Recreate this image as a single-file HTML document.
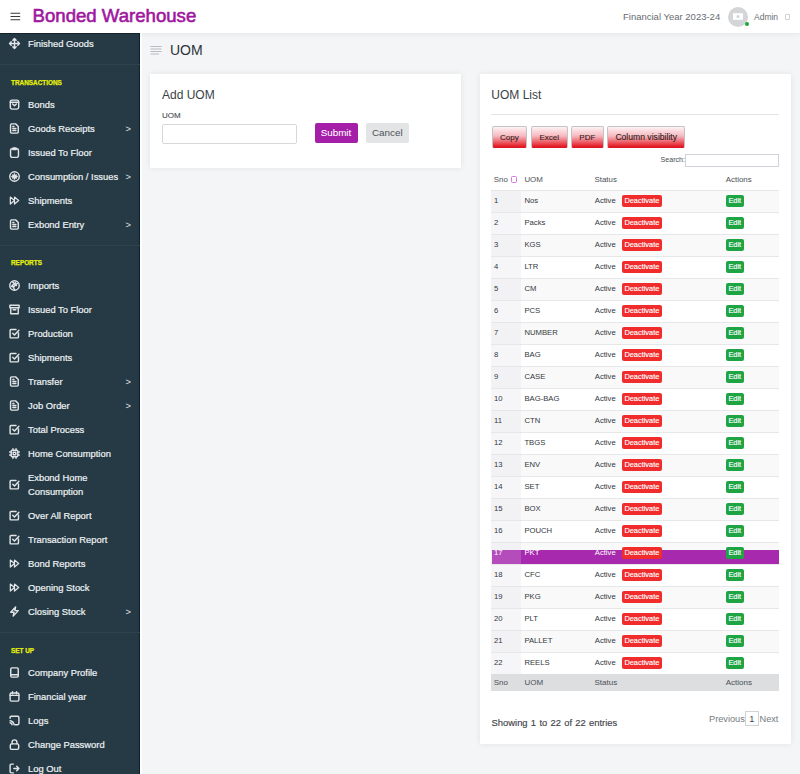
<!DOCTYPE html>
<html><head><meta charset="utf-8"><style>
*{box-sizing:border-box;margin:0;padding:0}
html,body{width:800px;height:774px;overflow:hidden;background:#f4f5f7;font-family:"Liberation Sans", sans-serif;position:relative}
.abs{position:absolute}
#hdr{position:absolute;left:0;top:0;width:800px;height:33px;background:#fff;box-shadow:0 2px 5px rgba(0,0,0,0.05);z-index:3}
#side{position:absolute;left:0;top:0;width:142px;height:774px;background:#263a45;border-right:2px solid #fff;z-index:2;overflow:hidden}
#side>div{position:absolute}
.si{left:28px;font-size:9.4px;line-height:14px;color:#eef2f4;white-space:nowrap;-webkit-text-stroke:0.2px #eef2f4}
.sic{left:9.1px;width:11px;height:11px;line-height:0;margin-top:-0.5px}
.sar{left:125.5px;font-size:9.4px;line-height:14px;color:#dfe5e8}
.sep{left:0;width:140px;height:1px;background:#2e434e}
.slab{left:11px;font-size:6.4px;line-height:10px;font-weight:bold;color:#e6f00a;-webkit-text-stroke:0.25px #e6f00a}
.card{position:absolute;background:#fff;box-shadow:0 0 6px rgba(0,0,0,0.08)}
.tr{position:absolute;left:491px;width:288px;height:22px;border-top:1px solid #e6e7e9;background:#fff}
.tr.odd{background:#f9f9f9}
.tr .c0{position:absolute;left:0;top:0;width:29.5px;height:21px;background:#f6f6f8}
.tr.odd .c0{background:#f2f2f4}
.sel{position:absolute;left:491.5px;width:287.5px;height:14.5px;background:#a72aae}
.c0s{position:absolute;left:0;top:0;width:29px;height:14.5px;background:#b44dbb}
.td{position:absolute;font-size:7.7px;line-height:22px;color:#33383d;white-space:nowrap;}
.deact{position:absolute;left:621.9px;width:40px;height:12px;background:#f12c2c;border-radius:2px;color:#fff;font-size:7.4px;line-height:12.9px;height:12px;text-align:center;-webkit-text-stroke:0.15px #fff}
.edit{position:absolute;left:725.75px;width:18px;height:12px;background:#1fa443;border-radius:2px;color:#fff;font-size:7.4px;line-height:12.9px;height:12px;text-align:center;-webkit-text-stroke:0.15px #fff}
.th{position:absolute;font-size:7.9px;line-height:12px;color:#4a4f55;white-space:nowrap}
.tf{position:absolute;font-size:8px;line-height:12px;color:#4a4f55;white-space:nowrap}
.dtb{position:absolute;top:126.2px;height:21.4px;border:1px solid #c4c4c4;border-bottom-color:#d81a24;border-radius:2px;background:linear-gradient(#fdf2f4,#f7b9c0 45%,#e3141e);color:#2a1e20;font-size:8px;line-height:21.6px;text-align:center;-webkit-text-stroke:0.1px #2a1e20}
</style></head><body>
<div id="hdr">
  <svg class="abs" style="left:10px;top:12px" width="11" height="9" viewBox="0 0 11 9"><path d="M0.5 1.2H10.2M0.5 4.5H10.2M0.5 7.8H10.2" stroke="#3c3c3c" stroke-width="1.1"/></svg>
  <div class="abs" style="left:32.6px;top:4px;font-size:18.6px;line-height:24px;color:#a0179f;white-space:nowrap;-webkit-text-stroke:0.6px #a0179f">Bonded Warehouse</div>
  <div class="abs" style="left:623px;top:11px;font-size:9.5px;line-height:12px;color:#676c72;white-space:nowrap">Financial Year 2023-24</div>
  <div class="abs" style="left:728px;top:6.5px;width:20px;height:20px;border-radius:50%;background:#d4d5d7"></div>
  <svg class="abs" style="left:732px;top:12px" width="12" height="9" viewBox="0 0 12 9"><rect x="1" y="1.2" width="10" height="6.6" fill="#fff"/><circle cx="6" cy="4.5" r="1.5" fill="#d4d5d7"/></svg>
  <div class="abs" style="left:744.5px;top:21.5px;width:4px;height:4px;border-radius:50%;background:#1aa83a"></div>
  <div class="abs" style="left:754px;top:11px;font-size:8.5px;line-height:12px;color:#6a6f74;white-space:nowrap">Admin</div>
  <div class="abs" style="left:785px;top:13.5px;width:5px;height:6px;border:1px solid #cfd1d4;border-radius:1px"></div>
</div>
<div id="side">
<div style="left:137px;top:33px;width:3px;height:741px;background:#22394a"></div><div style="left:139px;top:33px;width:1px;height:741px;background:#0f212b"></div><div style="left:0;top:33px;width:140px;height:1px;background:#14262f"></div>
<div class="si" style="top:36.67px">Finished Goods</div>
<div class="sic" style="top:38.00px"><svg width="11" height="11" viewBox="0 0 10 10" style="overflow:visible"><path d="M5 0.5V9.5M0.5 5H9.5M3.5 2L5 0.5L6.5 2M3.5 8L5 9.5L6.5 8M2 3.5L0.5 5L2 6.5M8 3.5L9.5 5L8 6.5" stroke="#e1e5e8" stroke-width="1.3" fill="none" stroke-linecap="round" stroke-linejoin="round"/></svg></div>
<div class="si" style="top:98.07px">Bonds</div>
<div class="sic" style="top:99.40px"><svg width="11" height="11" viewBox="0 0 10 10" style="overflow:visible"><rect x="1.2" y="1" width="7.6" height="8.2" rx="1.6" stroke="#e1e5e8" stroke-width="1.3" fill="none" stroke-linecap="round" stroke-linejoin="round"/><path d="M1.2 3H8.8M3.3 4.6L5 6.2L6.7 4.6" stroke="#e1e5e8" stroke-width="1.3" fill="none" stroke-linecap="round" stroke-linejoin="round"/></svg></div>
<div class="si" style="top:122.07px">Goods Receipts</div>
<div class="sic" style="top:123.40px"><svg width="11" height="11" viewBox="0 0 10 10" style="overflow:visible"><path d="M2.4 0.8H6L8.4 3.2V8.2Q8.4 9.2 7.4 9.2H2.4Q1.4 9.2 1.4 8.2V1.8Q1.4 0.8 2.4 0.8ZM3.5 5H6.3M3.5 6.8H6.3M3.5 3.2H4.5" stroke="#e1e5e8" stroke-width="1.3" fill="none" stroke-linecap="round" stroke-linejoin="round"/></svg></div>
<div class="sar" style="top:122.07px">&gt;</div>
<div class="si" style="top:146.07px">Issued To Floor</div>
<div class="sic" style="top:147.40px"><svg width="11" height="11" viewBox="0 0 10 10" style="overflow:visible"><rect x="1.4" y="1.6" width="7.2" height="7.8" rx="1.4" stroke="#e1e5e8" stroke-width="1.3" fill="none" stroke-linecap="round" stroke-linejoin="round"/><path d="M3.6 0.8H6.4V2.4H3.6Z" stroke="#e1e5e8" stroke-width="1.3" fill="none" stroke-linecap="round" stroke-linejoin="round"/></svg></div>
<div class="si" style="top:170.07px">Consumption / Issues</div>
<div class="sic" style="top:171.40px"><svg width="11" height="11" viewBox="0 0 10 10" style="overflow:visible"><circle cx="5" cy="5" r="4.3" stroke="#e1e5e8" stroke-width="1.3" fill="none" stroke-linecap="round" stroke-linejoin="round"/><path d="M3.4 3.6L6.6 6.4M6.6 3.6L3.4 6.4M5 2.6V7.4M2.6 5H7.4" stroke="#e1e5e8" stroke-width="1.3" fill="none" stroke-linecap="round" stroke-linejoin="round"/></svg></div>
<div class="sar" style="top:170.07px">&gt;</div>
<div class="si" style="top:194.07px">Shipments</div>
<div class="sic" style="top:195.40px"><svg width="11" height="11" viewBox="0 0 10 10" style="overflow:visible"><path d="M1.2 1.8L5 5L1.2 8.2ZM5 1.8L8.8 5L5 8.2Z" stroke="#e1e5e8" stroke-width="1.1" fill="none" stroke-linecap="round" stroke-linejoin="round"/></svg></div>
<div class="si" style="top:218.07px">Exbond Entry</div>
<div class="sic" style="top:219.40px"><svg width="11" height="11" viewBox="0 0 10 10" style="overflow:visible"><path d="M2.4 0.8H6L8.4 3.2V8.2Q8.4 9.2 7.4 9.2H2.4Q1.4 9.2 1.4 8.2V1.8Q1.4 0.8 2.4 0.8ZM3.5 5H6.3M3.5 6.8H6.3M3.5 3.2H4.5" stroke="#e1e5e8" stroke-width="1.3" fill="none" stroke-linecap="round" stroke-linejoin="round"/></svg></div>
<div class="sar" style="top:218.07px">&gt;</div>
<div class="si" style="top:279.07px">Imports</div>
<div class="sic" style="top:280.40px"><svg width="11" height="11" viewBox="0 0 10 10" style="overflow:visible"><circle cx="5" cy="5" r="4.3" stroke="#e1e5e8" stroke-width="1.3" fill="none" stroke-linecap="round" stroke-linejoin="round"/><path d="M3 1.6L6.8 5M7.6 3L3.8 6.8M2.2 6L6 2.4M5 8.6L3 4.6" stroke="#e1e5e8" stroke-width="1.3" fill="none" stroke-linecap="round" stroke-linejoin="round"/></svg></div>
<div class="si" style="top:303.07px">Issued To Floor</div>
<div class="sic" style="top:304.40px"><svg width="11" height="11" viewBox="0 0 10 10" style="overflow:visible"><path d="M0.8 1.2H9.2V3.4H0.8ZM1.6 3.4V8.8H8.4V3.4M3.8 5.2H6.2" stroke="#e1e5e8" stroke-width="1.3" fill="none" stroke-linecap="round" stroke-linejoin="round"/></svg></div>
<div class="si" style="top:327.07px">Production</div>
<div class="sic" style="top:328.40px"><svg width="11" height="11" viewBox="0 0 10 10" style="overflow:visible"><path d="M8.6 4.6V8.2Q8.6 9 7.8 9H1.8Q1 9 1 8.2V2.2Q1 1.4 1.8 1.4H6.4M3.4 4.8L5 6.4L9 2" stroke="#e1e5e8" stroke-width="1.3" fill="none" stroke-linecap="round" stroke-linejoin="round"/></svg></div>
<div class="si" style="top:351.07px">Shipments</div>
<div class="sic" style="top:352.40px"><svg width="11" height="11" viewBox="0 0 10 10" style="overflow:visible"><path d="M8.6 4.6V8.2Q8.6 9 7.8 9H1.8Q1 9 1 8.2V2.2Q1 1.4 1.8 1.4H6.4M3.4 4.8L5 6.4L9 2" stroke="#e1e5e8" stroke-width="1.3" fill="none" stroke-linecap="round" stroke-linejoin="round"/></svg></div>
<div class="si" style="top:375.07px">Transfer</div>
<div class="sic" style="top:376.40px"><svg width="11" height="11" viewBox="0 0 10 10" style="overflow:visible"><path d="M2.4 0.8H6L8.4 3.2V8.2Q8.4 9.2 7.4 9.2H2.4Q1.4 9.2 1.4 8.2V1.8Q1.4 0.8 2.4 0.8ZM3.5 5H6.3M3.5 6.8H6.3M3.5 3.2H4.5" stroke="#e1e5e8" stroke-width="1.3" fill="none" stroke-linecap="round" stroke-linejoin="round"/></svg></div>
<div class="sar" style="top:375.07px">&gt;</div>
<div class="si" style="top:399.07px">Job Order</div>
<div class="sic" style="top:400.40px"><svg width="11" height="11" viewBox="0 0 10 10" style="overflow:visible"><path d="M2.4 0.8H6L8.4 3.2V8.2Q8.4 9.2 7.4 9.2H2.4Q1.4 9.2 1.4 8.2V1.8Q1.4 0.8 2.4 0.8ZM3.5 5H6.3M3.5 6.8H6.3M3.5 3.2H4.5" stroke="#e1e5e8" stroke-width="1.3" fill="none" stroke-linecap="round" stroke-linejoin="round"/></svg></div>
<div class="sar" style="top:399.07px">&gt;</div>
<div class="si" style="top:423.07px">Total Process</div>
<div class="sic" style="top:424.40px"><svg width="11" height="11" viewBox="0 0 10 10" style="overflow:visible"><path d="M8.6 4.6V8.2Q8.6 9 7.8 9H1.8Q1 9 1 8.2V2.2Q1 1.4 1.8 1.4H6.4M3.4 4.8L5 6.4L9 2" stroke="#e1e5e8" stroke-width="1.3" fill="none" stroke-linecap="round" stroke-linejoin="round"/></svg></div>
<div class="si" style="top:447.07px">Home Consumption</div>
<div class="sic" style="top:448.40px"><svg width="11" height="11" viewBox="0 0 10 10" style="overflow:visible"><rect x="2" y="2" width="6" height="6" rx="1" stroke="#e1e5e8" stroke-width="1.3" fill="none" stroke-linecap="round" stroke-linejoin="round"/><rect x="3.8" y="3.8" width="2.4" height="2.4" stroke="#e1e5e8" stroke-width="1.3" fill="none" stroke-linecap="round" stroke-linejoin="round"/><path d="M3.6 0.6V2M6.4 0.6V2M3.6 8V9.4M6.4 8V9.4M0.6 3.6H2M0.6 6.4H2M8 3.6H9.4M8 6.4H9.4" stroke="#e1e5e8" stroke-width="1.3" fill="none" stroke-linecap="round" stroke-linejoin="round"/></svg></div>
<div class="si" style="top:471.07px">Exbond Home<br>Consumption</div>
<div class="sic" style="top:479.40px"><svg width="11" height="11" viewBox="0 0 10 10" style="overflow:visible"><path d="M8.6 4.6V8.2Q8.6 9 7.8 9H1.8Q1 9 1 8.2V2.2Q1 1.4 1.8 1.4H6.4M3.4 4.8L5 6.4L9 2" stroke="#e1e5e8" stroke-width="1.3" fill="none" stroke-linecap="round" stroke-linejoin="round"/></svg></div>
<div class="si" style="top:509.07px">Over All Report</div>
<div class="sic" style="top:510.40px"><svg width="11" height="11" viewBox="0 0 10 10" style="overflow:visible"><path d="M8.6 4.6V8.2Q8.6 9 7.8 9H1.8Q1 9 1 8.2V2.2Q1 1.4 1.8 1.4H6.4M3.4 4.8L5 6.4L9 2" stroke="#e1e5e8" stroke-width="1.3" fill="none" stroke-linecap="round" stroke-linejoin="round"/></svg></div>
<div class="si" style="top:533.07px">Transaction Report</div>
<div class="sic" style="top:534.40px"><svg width="11" height="11" viewBox="0 0 10 10" style="overflow:visible"><path d="M8.6 4.6V8.2Q8.6 9 7.8 9H1.8Q1 9 1 8.2V2.2Q1 1.4 1.8 1.4H6.4M3.4 4.8L5 6.4L9 2" stroke="#e1e5e8" stroke-width="1.3" fill="none" stroke-linecap="round" stroke-linejoin="round"/></svg></div>
<div class="si" style="top:557.07px">Bond Reports</div>
<div class="sic" style="top:558.40px"><svg width="11" height="11" viewBox="0 0 10 10" style="overflow:visible"><path d="M1.2 1.8L5 5L1.2 8.2ZM5 1.8L8.8 5L5 8.2Z" stroke="#e1e5e8" stroke-width="1.1" fill="none" stroke-linecap="round" stroke-linejoin="round"/></svg></div>
<div class="si" style="top:581.07px">Opening Stock</div>
<div class="sic" style="top:582.40px"><svg width="11" height="11" viewBox="0 0 10 10" style="overflow:visible"><path d="M1.2 1.8L5 5L1.2 8.2ZM5 1.8L8.8 5L5 8.2Z" stroke="#e1e5e8" stroke-width="1.1" fill="none" stroke-linecap="round" stroke-linejoin="round"/></svg></div>
<div class="si" style="top:605.07px">Closing Stock</div>
<div class="sic" style="top:606.40px"><svg width="11" height="11" viewBox="0 0 10 10" style="overflow:visible"><path d="M6 0.8L1.6 5.6H4.6L3.8 9.2L8.4 4.2H5.4Z" stroke="#e1e5e8" stroke-width="1.3" fill="none" stroke-linecap="round" stroke-linejoin="round"/></svg></div>
<div class="sar" style="top:605.07px">&gt;</div>
<div class="si" style="top:666.47px">Company Profile</div>
<div class="sic" style="top:667.80px"><svg width="11" height="11" viewBox="0 0 10 10" style="overflow:visible"><rect x="1.6" y="0.8" width="6.8" height="8.4" rx="1" stroke="#e1e5e8" stroke-width="1.3" fill="none" stroke-linecap="round" stroke-linejoin="round"/><path d="M1.6 7H8.4" stroke="#e1e5e8" stroke-width="1.3" fill="none" stroke-linecap="round" stroke-linejoin="round"/></svg></div>
<div class="si" style="top:690.47px">Financial year</div>
<div class="sic" style="top:691.80px"><svg width="11" height="11" viewBox="0 0 10 10" style="overflow:visible"><rect x="1" y="1.8" width="8" height="7.4" rx="1.2" stroke="#e1e5e8" stroke-width="1.3" fill="none" stroke-linecap="round" stroke-linejoin="round"/><path d="M1 4H9M3.2 0.6V2.6M6.8 0.6V2.6" stroke="#e1e5e8" stroke-width="1.3" fill="none" stroke-linecap="round" stroke-linejoin="round"/></svg></div>
<div class="si" style="top:714.47px">Logs</div>
<div class="sic" style="top:715.80px"><svg width="11" height="11" viewBox="0 0 10 10" style="overflow:visible"><path d="M1 3V2.2Q1 1.2 2 1.2H8Q9 1.2 9 2.2V7.8Q9 8.8 8 8.8H5.6M1 5.2Q4 5.4 4.6 8.8M1 7Q2.6 7.2 2.8 8.8" stroke="#e1e5e8" stroke-width="1.3" fill="none" stroke-linecap="round" stroke-linejoin="round"/></svg></div>
<div class="si" style="top:738.47px">Change Password</div>
<div class="sic" style="top:739.80px"><svg width="11" height="11" viewBox="0 0 10 10" style="overflow:visible"><rect x="1.2" y="4.4" width="7.6" height="5" rx="1.2" stroke="#e1e5e8" stroke-width="1.3" fill="none" stroke-linecap="round" stroke-linejoin="round"/><path d="M2.8 4.4V3Q2.8 0.8 5 0.8Q7.2 0.8 7.2 3V4.4" stroke="#e1e5e8" stroke-width="1.3" fill="none" stroke-linecap="round" stroke-linejoin="round"/></svg></div>
<div class="si" style="top:762.47px">Log Out</div>
<div class="sic" style="top:763.80px"><svg width="11" height="11" viewBox="0 0 10 10" style="overflow:visible"><path d="M4 1H2Q1 1 1 2V8Q1 9 2 9H4M4.4 5H9M7 3L9 5L7 7" stroke="#e1e5e8" stroke-width="1.3" fill="none" stroke-linecap="round" stroke-linejoin="round"/></svg></div>
<div class="sep" style="top:64px"></div>
<div class="sep" style="top:245px"></div>
<div class="sep" style="top:632px"></div>
<div class="slab" style="top:77.76px">TRANSACTIONS</div>
<div class="slab" style="top:258.46px">REPORTS</div>
<div class="slab" style="top:645.76px">SET UP</div>
</div>
<!-- page title -->
<svg class="abs" style="left:150px;top:45px" width="13" height="10" viewBox="0 0 13 10"><path d="M0.5 1.5H11.5M0.5 4H11.5M0.5 6.5H11.5M0.5 9H9" stroke="#b9bcc0" stroke-width="1"/></svg>
<div class="abs" style="left:170px;top:41px;font-size:14px;line-height:18px;color:#2d333a">UOM</div>

<!-- card 1 -->
<div class="card" style="left:150px;top:74px;width:311px;height:94px"></div>
<div class="abs" style="left:162px;top:87px;font-size:12px;line-height:16px;color:#3a3f45">Add UOM</div>
<div class="abs" style="left:162px;top:111px;font-size:8px;line-height:10px;color:#44494e;-webkit-text-stroke:0.1px #44494e">UOM</div>
<div class="abs" style="left:162px;top:124.4px;width:134.6px;height:19.4px;border:1px solid #d5d7da;border-radius:2px;background:#fff"></div>
<div class="abs" style="left:314.5px;top:122.6px;width:43px;height:20px;background:#a51ea8;border-radius:2px;color:#fff;font-size:9.8px;line-height:20px;text-align:center;-webkit-text-stroke:0.05px #fff">Submit</div>
<div class="abs" style="left:366px;top:122.6px;width:42.6px;height:20px;background:#e3e4e6;border-radius:2px;color:#4d5358;font-size:9.9px;line-height:20px;text-align:center">Cancel</div>

<!-- card 2 -->
<div class="card" style="left:480px;top:74px;width:311px;height:670px"></div>
<div class="abs" style="left:491.3px;top:87px;font-size:12px;line-height:16px;color:#3a3f45">UOM List</div>
<div class="abs" style="left:491px;top:114px;width:288px;height:1px;background:#e3e4e6"></div>
<div class="dtb" style="left:491.6px;width:35.6px">Copy</div>
<div class="dtb" style="left:531px;width:36.5px">Excel</div>
<div class="dtb" style="left:570.9px;width:32.9px">PDF</div>
<div class="dtb" style="left:606.9px;width:78.6px;font-size:8.6px">Column visibility</div>
<div class="abs" style="left:660.6px;top:154px;font-size:7.1px;line-height:12px;color:#4a4f54">Search:</div>
<div class="abs" style="left:685.2px;top:153.5px;width:93.5px;height:13.2px;border:1px solid #cfd2d6;background:#fff"></div>
<div class="th" style="left:493.75px;top:173.7px">Sno</div>
<div class="abs" style="left:510.6px;top:175.6px;width:6.3px;height:7.2px;border:1px solid #d27ad8;border-radius:1.5px"></div>
<div class="th" style="left:524.4px;top:173.7px">UOM</div>
<div class="th" style="left:594.5px;top:173.7px">Status</div>
<div class="th" style="left:725.75px;top:173.7px">Actions</div>
<div class="tr odd" style="top:190px"><div class="c0"></div></div>
<div class="td" style="top:190.2px;left:494px;">1</div>
<div class="td" style="top:190.2px;left:524.4px;">Nos</div>
<div class="td" style="top:190.2px;left:594.75px;">Active</div>
<div class="deact" style="top:195.25px">Deactivate</div>
<div class="edit" style="top:195.25px">Edit</div>
<div class="tr" style="top:212px"><div class="c0"></div></div>
<div class="td" style="top:212.2px;left:494px;">2</div>
<div class="td" style="top:212.2px;left:524.4px;">Packs</div>
<div class="td" style="top:212.2px;left:594.75px;">Active</div>
<div class="deact" style="top:217.25px">Deactivate</div>
<div class="edit" style="top:217.25px">Edit</div>
<div class="tr odd" style="top:234px"><div class="c0"></div></div>
<div class="td" style="top:234.2px;left:494px;">3</div>
<div class="td" style="top:234.2px;left:524.4px;">KGS</div>
<div class="td" style="top:234.2px;left:594.75px;">Active</div>
<div class="deact" style="top:239.25px">Deactivate</div>
<div class="edit" style="top:239.25px">Edit</div>
<div class="tr" style="top:256px"><div class="c0"></div></div>
<div class="td" style="top:256.2px;left:494px;">4</div>
<div class="td" style="top:256.2px;left:524.4px;">LTR</div>
<div class="td" style="top:256.2px;left:594.75px;">Active</div>
<div class="deact" style="top:261.25px">Deactivate</div>
<div class="edit" style="top:261.25px">Edit</div>
<div class="tr odd" style="top:278px"><div class="c0"></div></div>
<div class="td" style="top:278.2px;left:494px;">5</div>
<div class="td" style="top:278.2px;left:524.4px;">CM</div>
<div class="td" style="top:278.2px;left:594.75px;">Active</div>
<div class="deact" style="top:283.25px">Deactivate</div>
<div class="edit" style="top:283.25px">Edit</div>
<div class="tr" style="top:300px"><div class="c0"></div></div>
<div class="td" style="top:300.2px;left:494px;">6</div>
<div class="td" style="top:300.2px;left:524.4px;">PCS</div>
<div class="td" style="top:300.2px;left:594.75px;">Active</div>
<div class="deact" style="top:305.25px">Deactivate</div>
<div class="edit" style="top:305.25px">Edit</div>
<div class="tr odd" style="top:322px"><div class="c0"></div></div>
<div class="td" style="top:322.2px;left:494px;">7</div>
<div class="td" style="top:322.2px;left:524.4px;">NUMBER</div>
<div class="td" style="top:322.2px;left:594.75px;">Active</div>
<div class="deact" style="top:327.25px">Deactivate</div>
<div class="edit" style="top:327.25px">Edit</div>
<div class="tr" style="top:344px"><div class="c0"></div></div>
<div class="td" style="top:344.2px;left:494px;">8</div>
<div class="td" style="top:344.2px;left:524.4px;">BAG</div>
<div class="td" style="top:344.2px;left:594.75px;">Active</div>
<div class="deact" style="top:349.25px">Deactivate</div>
<div class="edit" style="top:349.25px">Edit</div>
<div class="tr odd" style="top:366px"><div class="c0"></div></div>
<div class="td" style="top:366.2px;left:494px;">9</div>
<div class="td" style="top:366.2px;left:524.4px;">CASE</div>
<div class="td" style="top:366.2px;left:594.75px;">Active</div>
<div class="deact" style="top:371.25px">Deactivate</div>
<div class="edit" style="top:371.25px">Edit</div>
<div class="tr" style="top:388px"><div class="c0"></div></div>
<div class="td" style="top:388.2px;left:494px;">10</div>
<div class="td" style="top:388.2px;left:524.4px;">BAG-BAG</div>
<div class="td" style="top:388.2px;left:594.75px;">Active</div>
<div class="deact" style="top:393.25px">Deactivate</div>
<div class="edit" style="top:393.25px">Edit</div>
<div class="tr odd" style="top:410px"><div class="c0"></div></div>
<div class="td" style="top:410.2px;left:494px;">11</div>
<div class="td" style="top:410.2px;left:524.4px;">CTN</div>
<div class="td" style="top:410.2px;left:594.75px;">Active</div>
<div class="deact" style="top:415.25px">Deactivate</div>
<div class="edit" style="top:415.25px">Edit</div>
<div class="tr" style="top:432px"><div class="c0"></div></div>
<div class="td" style="top:432.2px;left:494px;">12</div>
<div class="td" style="top:432.2px;left:524.4px;">TBGS</div>
<div class="td" style="top:432.2px;left:594.75px;">Active</div>
<div class="deact" style="top:437.25px">Deactivate</div>
<div class="edit" style="top:437.25px">Edit</div>
<div class="tr odd" style="top:454px"><div class="c0"></div></div>
<div class="td" style="top:454.2px;left:494px;">13</div>
<div class="td" style="top:454.2px;left:524.4px;">ENV</div>
<div class="td" style="top:454.2px;left:594.75px;">Active</div>
<div class="deact" style="top:459.25px">Deactivate</div>
<div class="edit" style="top:459.25px">Edit</div>
<div class="tr" style="top:476px"><div class="c0"></div></div>
<div class="td" style="top:476.2px;left:494px;">14</div>
<div class="td" style="top:476.2px;left:524.4px;">SET</div>
<div class="td" style="top:476.2px;left:594.75px;">Active</div>
<div class="deact" style="top:481.25px">Deactivate</div>
<div class="edit" style="top:481.25px">Edit</div>
<div class="tr odd" style="top:498px"><div class="c0"></div></div>
<div class="td" style="top:498.2px;left:494px;">15</div>
<div class="td" style="top:498.2px;left:524.4px;">BOX</div>
<div class="td" style="top:498.2px;left:594.75px;">Active</div>
<div class="deact" style="top:503.25px">Deactivate</div>
<div class="edit" style="top:503.25px">Edit</div>
<div class="tr" style="top:520px"><div class="c0"></div></div>
<div class="td" style="top:520.2px;left:494px;">16</div>
<div class="td" style="top:520.2px;left:524.4px;">POUCH</div>
<div class="td" style="top:520.2px;left:594.75px;">Active</div>
<div class="deact" style="top:525.25px">Deactivate</div>
<div class="edit" style="top:525.25px">Edit</div>
<div class="tr odd" style="top:542px"><div class="c0"></div></div>
<div class="sel" style="top:549.5px"><div class="c0s"></div></div>
<div class="td" style="top:542.2px;left:494px;color:#fff;-webkit-text-stroke-color:#fff;">17</div>
<div class="td" style="top:542.2px;left:524.4px;color:#fff;-webkit-text-stroke-color:#fff;">PKT</div>
<div class="td" style="top:542.2px;left:594.75px;color:#fff;-webkit-text-stroke-color:#fff;">Active</div>
<div class="deact" style="top:547.25px">Deactivate</div>
<div class="edit" style="top:547.25px">Edit</div>
<div class="tr" style="top:564px"><div class="c0"></div></div>
<div class="td" style="top:564.2px;left:494px;">18</div>
<div class="td" style="top:564.2px;left:524.4px;">CFC</div>
<div class="td" style="top:564.2px;left:594.75px;">Active</div>
<div class="deact" style="top:569.25px">Deactivate</div>
<div class="edit" style="top:569.25px">Edit</div>
<div class="tr odd" style="top:586px"><div class="c0"></div></div>
<div class="td" style="top:586.2px;left:494px;">19</div>
<div class="td" style="top:586.2px;left:524.4px;">PKG</div>
<div class="td" style="top:586.2px;left:594.75px;">Active</div>
<div class="deact" style="top:591.25px">Deactivate</div>
<div class="edit" style="top:591.25px">Edit</div>
<div class="tr" style="top:608px"><div class="c0"></div></div>
<div class="td" style="top:608.2px;left:494px;">20</div>
<div class="td" style="top:608.2px;left:524.4px;">PLT</div>
<div class="td" style="top:608.2px;left:594.75px;">Active</div>
<div class="deact" style="top:613.25px">Deactivate</div>
<div class="edit" style="top:613.25px">Edit</div>
<div class="tr odd" style="top:630px"><div class="c0"></div></div>
<div class="td" style="top:630.2px;left:494px;">21</div>
<div class="td" style="top:630.2px;left:524.4px;">PALLET</div>
<div class="td" style="top:630.2px;left:594.75px;">Active</div>
<div class="deact" style="top:635.25px">Deactivate</div>
<div class="edit" style="top:635.25px">Edit</div>
<div class="tr" style="top:652px"><div class="c0"></div></div>
<div class="td" style="top:652.2px;left:494px;">22</div>
<div class="td" style="top:652.2px;left:524.4px;">REELS</div>
<div class="td" style="top:652.2px;left:594.75px;">Active</div>
<div class="deact" style="top:657.25px">Deactivate</div>
<div class="edit" style="top:657.25px">Edit</div>
<div class="abs" style="left:491px;top:674px;width:288px;height:17px;background:#dcdee0"></div>
<div class="tf" style="left:493.75px;top:677px">Sno</div>
<div class="tf" style="left:524.4px;top:677px">UOM</div>
<div class="tf" style="left:594.5px;top:677px">Status</div>
<div class="tf" style="left:725.75px;top:677px">Actions</div>
<div class="abs" style="left:491.6px;top:716px;font-size:9.4px;line-height:14px;color:#3f444a;white-space:nowrap;word-spacing:0.7px;-webkit-text-stroke:0.15px #3f444a">Showing 1 to 22 of 22 entries</div>
<div class="abs" style="left:709px;top:712px;font-size:9.2px;line-height:14px;color:#757a80;white-space:nowrap">Previous</div>
<div class="abs" style="left:745px;top:711.3px;width:13.8px;height:15.2px;border:1px solid #cfd2d6;font-size:9.2px;line-height:14.5px;text-align:center;color:#3f444a">1</div>
<div class="abs" style="left:759.5px;top:712px;font-size:9.2px;line-height:14px;color:#757a80;white-space:nowrap">Next</div>
</body></html>
